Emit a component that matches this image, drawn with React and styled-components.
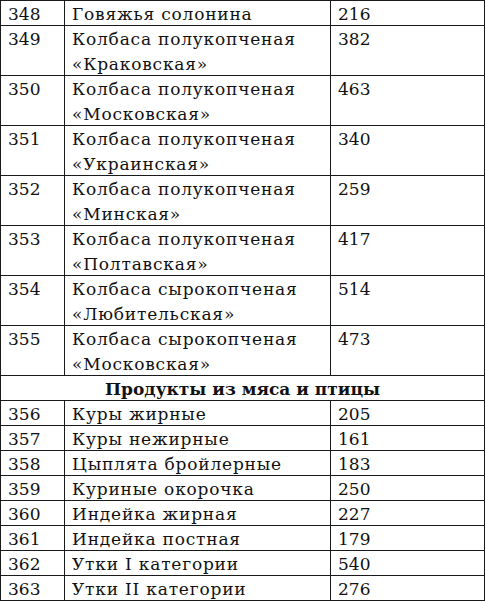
import styled, { createGlobalStyle } from "styled-components";

const GlobalStyle = createGlobalStyle`
  html, body {
    margin: 0;
    padding: 0;
    background: #fff;
  }
  body {
    font-family: "DejaVu Serif", "Liberation Serif", serif;
    color: #111;
  }
`;

const rows = [
  ["348", ["Говяжья солонина"], "216"],
  ["349", ["Колбаса полукопченая", "«Краковская»"], "382"],
  ["350", ["Колбаса полукопченая", "«Московская»"], "463"],
  ["351", ["Колбаса полукопченая", "«Украинская»"], "340"],
  ["352", ["Колбаса полукопченая", "«Минская»"], "259"],
  ["353", ["Колбаса полукопченая", "«Полтавская»"], "417"],
  ["354", ["Колбаса сырокопченая", "«Любительская»"], "514"],
  ["355", ["Колбаса сырокопченая", "«Московская»"], "473"],
  { section: "Продукты из мяса и птицы" },
  ["356", ["Куры жирные"], "205"],
  ["357", ["Куры нежирные"], "161"],
  ["358", ["Цыплята бройлерные"], "183"],
  ["359", ["Куриные окорочка"], "250"],
  ["360", ["Индейка жирная"], "227"],
  ["361", ["Индейка постная"], "179"],
  ["362", ["Утки I категории"], "540"],
  ["363", ["Утки II категории"], "276"],
];

function App() {
  return (
    <>
      <GlobalStyle />
      <Table>
        <colgroup>
          <col style={{ width: 64 }} />
          <col style={{ width: 266 }} />
          <col style={{ width: 154 }} />
        </colgroup>
        <tbody>
          {rows.map((r, i) =>
            r.section ? (
              <Row key={i} $lines={1}>
                <Section colSpan={3}>{r.section}</Section>
              </Row>
            ) : (
              <Row key={i} $lines={r[1].length}>
                <Cell>{r[0]}</Cell>
                <Cell $wide>
                  {r[1].map((l, j) => (
                    <Line key={j}>{l}</Line>
                  ))}
                </Cell>
                <Cell>{r[2]}</Cell>
              </Row>
            )
          )}
        </tbody>
      </Table>
    </>
  );
}

const Table = styled.table`
  width: 484px;
  border-collapse: collapse;
  table-layout: fixed;
  font-size: 17px;
  line-height: 20px;
`;

const Row = styled.tr`
  height: ${(p) => p.$lines * 25}px;
`;

const Cell = styled.td`
  border: 1.5px solid #1a1a1a;
  padding: 3px 7px 0;
  vertical-align: top;
  white-space: nowrap;
  overflow: hidden;
  letter-spacing: ${(p) => (p.$wide ? "0.8px" : "0")};
`;

const Line = styled.div`
  & + & {
    margin-top: 5px;
  }
`;

const Section = styled.td`
  border: 1.5px solid #1a1a1a;
  padding: 3px 7px 0;
  vertical-align: top;
  text-align: center;
  font-weight: bold;
`;

export default App;
